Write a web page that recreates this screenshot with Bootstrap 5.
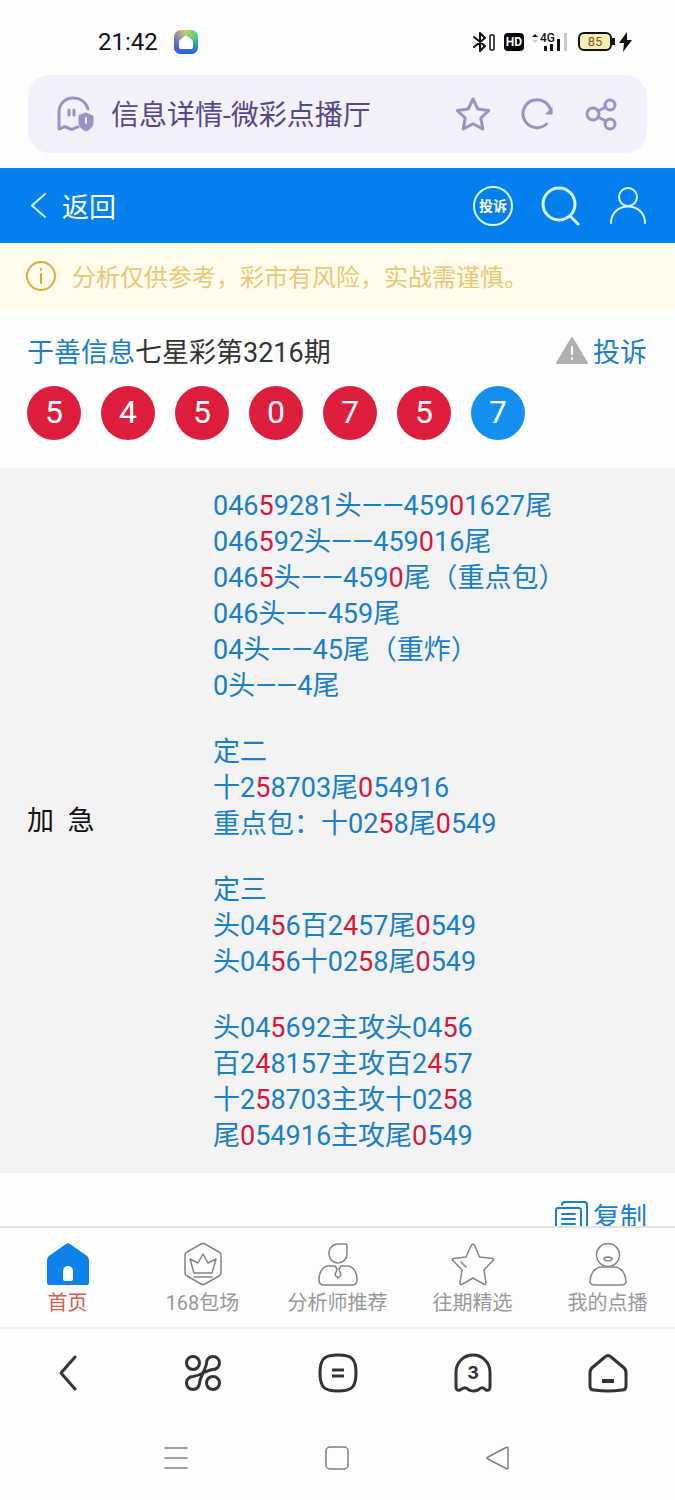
<!DOCTYPE html>
<html lang="zh-CN">
<head>
<meta charset="utf-8">
<meta name="viewport" content="width=device-width, initial-scale=1">
<title>信息详情-微彩点播厅</title>
<link href="https://cdn.jsdelivr.net/npm/bootstrap@5.3.0/dist/css/bootstrap.min.css" rel="stylesheet">
<style>
  :root { --brand: #0380ee; --ink-blue: #1a7fc9; --hit: #d8173a; --violet: #9a92c4; }
  body { font-family: Roboto, "Noto Sans CJK SC", sans-serif; font-size: 27px; line-height: 36px; color: #333; background: #fdfdfd; }
  svg { display: block; flex: none; fill: none; stroke-linecap: round; stroke-linejoin: round; }
  a { color: inherit; text-decoration: none; }
  .plain { border: 0; background: none; padding: 0; color: inherit; line-height: 1; }
  .cjk-label { padding-top: 4px; }
  .status-row { height: 75px; padding: 8px 42px 0 98px; color: #111; }
  .clock { font-size: 24px; }
  .hd-tag { width: 20px; height: 18px; border-radius: 4px; background: #000; color: #fff; font-size: 12px; line-height: 18px; font-weight: 700; text-align: center; }
  .battery { width: 34px; height: 19px; border: 2px solid #111; border-radius: 6px; background: #fbefb4; color: #7a5a20; font-size: 13px; line-height: 15px; text-align: center; }
  .battery-tip { width: 3px; height: 7px; background: #111; }
  .address { height: 78px; margin: 0 28px 15px; padding: 0 28px; border-radius: 22px; background: #f2f1f9; color: #54488c; font-size: 28px; }
  .address svg { stroke: var(--violet); }
  .address-actions { gap: 28px; }
  .topbar { height: 75px; padding: 0 28px 0 31px; background: var(--brand); color: #fff; }
  .topbar svg { stroke: #d9f6ff; }
  .complain-tag { width: 40px; height: 40px; border: 2px solid #d9f6ff; font-size: 14px; font-weight: 700; line-height: 36px; text-align: center; }
  .notice { height: 66px; padding: 0 26px; background: #fffcec; color: #ebc777; font-size: 24px; }
  .issue { padding: 22px 28px 28px 27px; }
  .blue-text { color: var(--ink-blue); }
  .ball { width: 54px; height: 54px; background: #dc1e3c; color: #fff; font-size: 32px; line-height: 52px; text-align: center; }
  .ball-last { background: #138ff0; }
  .gap-balls { gap: 20px; margin-top: 15px; }
  .forecast { padding: 20px 27px 19px; background: #f3f3f3; }
  .forecast-label { width: 186px; color: #111; }
  .forecast p { margin: 0 0 30px; }
  .forecast p:last-child { margin: 0; }
  .forecast b { color: var(--hit); font-weight: 400; }
  .copy-row { padding: 28px 28px; }
  .scroller { min-height: 0; scrollbar-width: none; }
  .scroller::-webkit-scrollbar { display: none; }
  .tabs { height: 103px; padding-top: 14px; border-top: 2px solid #e2e2e2; border-bottom: 2px solid #eee; color: #999; font-size: 20px; line-height: 34px; }
  .tabs svg { stroke: #858585; stroke-width: 1.5; }
  .tabs .on { color: #dc5a4c; }
  .toolbar { height: 87px; }
  .toolbar svg { stroke: #333; stroke-width: 3; }
  .sysnav { height: 84px; padding: 0 96px; }
  .sysnav svg { stroke: #808080; stroke-width: 1.5; }
</style>
</head>
<body>
<div class="d-flex flex-column vh-100">
  <header class="flex-shrink-0">
    <div class="status-row d-flex align-items-center">
      <span class="clock">21:42</span>
      <svg class="ms-3" width="24" height="24" viewBox="0 0 24 24" aria-hidden="true">
        <defs>
          <linearGradient id="hue" x1="0" y1="0" x2="1" y2="0"><stop offset="0" stop-color="#ff9a4a"/><stop offset=".45" stop-color="#e2d84f"/><stop offset="1" stop-color="#2fd08a"/></linearGradient>
          <linearGradient id="hue2" x1="1" y1="0" x2="0" y2="1"><stop offset=".2" stop-color="#2b8cf0" stop-opacity="0"/><stop offset=".55" stop-color="#2b7cf0" stop-opacity=".5"/><stop offset="1" stop-color="#5a45e0"/></linearGradient>
          <linearGradient id="hue3" x1="0" y1="0" x2="0" y2="1"><stop offset=".3" stop-color="#2563e8" stop-opacity="0"/><stop offset="1" stop-color="#2563e8"/></linearGradient>
        </defs>
        <rect width="24" height="24" rx="7" fill="url(#hue)"/><rect width="24" height="24" rx="7" fill="url(#hue2)"/><rect width="24" height="24" rx="7" fill="url(#hue3)"/>
        <path d="M5 12q0-2 2-3l4-3q1-1 2 0l4 3q2 1 2 3v5q0 2-2 2H7q-2 0-2-2z" fill="#fff"/>
      </svg>
      <div class="ms-auto d-flex align-items-center">
        <svg width="24" height="20" viewBox="0 0 24 20" stroke="#111" stroke-width="2" aria-hidden="true"><path d="M2 5l11 9-5 5V1l5 5-11 9"/><rect x="18" y="3" width="4" height="15" rx="1" stroke-width="1.5"/></svg>
        <span class="hd-tag ms-2">HD</span>
        <svg class="ms-2" width="38" height="20" viewBox="0 0 38 20" fill="#111" aria-hidden="true"><path fill="#111" d="M0 5l3-3 3 3zM12 14h3v5h-3zM18 12h3v7h-3zM25 7h3v12h-3z"/><path fill="#ccc" d="M0 8h6l-3 3zM32 1h3v18h-3z"/><text x="8" y="10" fill="#111" font-size="12" font-weight="500">4G</text></svg>
        <span class="battery ms-2">85</span><span class="battery-tip"></span>
        <svg class="ms-1" width="14" height="20" viewBox="0 0 14 20" aria-hidden="true"><path fill="#111" d="M8 0L0 11h5l-1 9 9-12H8z"/></svg>
      </div>
    </div>
    <div class="address d-flex align-items-center">
      <svg width="39" height="38" viewBox="0 0 39 38" stroke-width="3" aria-hidden="true"><path d="M32 14C30 7 24 3 17 3C9 3 3 9 3 17V34c3 0 4-3 7-2s4 3 7 2 3-2 5-2"/><path d="M13 15v5M18 15v5"/><path d="M30 18l7 3v7q0 5-7 8q-7-3-7-8v-7z" fill="#9a92c4" stroke-width="1"/><path d="M30 23v5" stroke="#f2f1f9" stroke-width="2"/></svg>
      <span class="cjk-label ms-3 text-nowrap">信息详情-微彩点播厅</span>
      <div class="address-actions ms-auto d-flex align-items-center">
        <button class="plain" aria-label="收藏"><svg width="36" height="36" viewBox="0 0 36 36" stroke-width="3"><path d="M18 3l4.800 10 11 1.500-8 7.500 2 11-9.800-5.300L8.200 33l2-11-8-7.500 11-1.500z"/></svg></button>
        <button class="plain" aria-label="刷新"><svg width="36" height="36" viewBox="0 0 36 36" stroke-width="3"><path d="M27.500 28A14 14 0 1 1 32 17"/><path d="M33 12v6h-6z" fill="#9a92c4" stroke-width="1"/></svg></button>
        <button class="plain" aria-label="分享"><svg width="36" height="36" viewBox="0 0 36 36" stroke-width="3"><circle cx="10" cy="18" r="6"/><circle cx="27" cy="9" r="5"/><circle cx="27" cy="28" r="5"/><path d="M15 15l8-4M15 21l8 4"/></svg></button>
      </div>
    </div>
  </header>

  <nav class="topbar flex-shrink-0 d-flex align-items-center">
    <a href="#" class="d-flex align-items-center"><svg class="me-3" width="15" height="25" viewBox="0 0 15 25" stroke-width="2"><path d="M14 1L1 12.500 14 24"/></svg><span class="cjk-label">返回</span></a>
    <div class="ms-auto d-flex align-items-center">
      <a href="#" class="complain-tag rounded-circle">投诉</a>
      <a href="#" class="ms-4 ps-1" aria-label="搜索"><svg width="40" height="40" viewBox="0 0 40 40" stroke-width="3"><circle cx="18" cy="18" r="16"/><path d="M29 30l8 8"/></svg></a>
      <a href="#" class="ms-4 ps-1" aria-label="我的"><svg width="38" height="40" viewBox="0 0 38 40" stroke-width="2"><circle cx="19" cy="11" r="9"/><path d="M2 37c0-22 34-22 34 0"/></svg></a>
    </div>
  </nav>

  <main class="scroller flex-grow-1 overflow-auto">
    <div class="notice d-flex align-items-center">
      <svg class="me-3" width="30" height="30" viewBox="0 0 30 30" stroke="#e0a83c" stroke-width="2" aria-hidden="true"><circle cx="15" cy="15" r="14"/><path d="M15 13v9"/><path d="M15 8v1"/></svg>
      <span class="cjk-label">分析仅供参考，彩市有风险，实战需谨慎。</span>
    </div>

    <section class="issue">
      <div class="d-flex align-items-center justify-content-between">
        <div class="cjk-label"><a href="#" class="blue-text">于善信息</a>七星彩第3216期</div>
        <a href="#" class="blue-text d-flex align-items-center"><svg class="me-1" width="34" height="30" viewBox="0 0 34 30" aria-hidden="true"><path fill="#b0b0b0" stroke="#b0b0b0" stroke-width="2" d="M17 2l15 25H2z"/><path d="M17 11v7M17 22v1" stroke="#fff" stroke-width="2"/></svg><span class="cjk-label">投诉</span></a>
      </div>
      <div class="d-flex gap-balls">
        <span class="ball rounded-circle">5</span><span class="ball rounded-circle">4</span><span class="ball rounded-circle">5</span><span class="ball rounded-circle">0</span><span class="ball rounded-circle">7</span><span class="ball rounded-circle">5</span><span class="ball ball-last rounded-circle">7</span>
      </div>
    </section>

    <section class="forecast d-flex align-items-center">
      <div class="forecast-label flex-shrink-0">加&nbsp;&nbsp;急</div>
      <div class="blue-text">
        <p>046<b>5</b>9281头——459<b>0</b>1627尾<br>046<b>5</b>92头——459<b>0</b>16尾<br>046<b>5</b>头——459<b>0</b>尾（重点包）<br>046头——459尾<br>04头——45尾（重炸）<br>0头——4尾</p>
        <p>定二<br>十2<b>5</b>8703尾<b>0</b>54916<br>重点包：十02<b>5</b>8尾<b>0</b>549</p>
        <p>定三<br>头04<b>5</b>6百2<b>4</b>57尾<b>0</b>549<br>头04<b>5</b>6十02<b>5</b>8尾<b>0</b>549</p>
        <p>头04<b>5</b>692主攻头04<b>5</b>6<br>百2<b>4</b>8157主攻百2<b>4</b>57<br>十2<b>5</b>8703主攻十02<b>5</b>8<br>尾<b>0</b>54916主攻尾<b>0</b>549</p>
      </div>
    </section>

    <div class="copy-row d-flex justify-content-end blue-text">
      <button class="plain d-flex align-items-center"><svg class="me-1" width="34" height="34" viewBox="0 0 34 34" stroke="#1a7fc9" stroke-width="2"><path d="M7 4q0-3 3-3h19q3 0 3 3v23"/><rect x="1" y="7" width="25" height="26" rx="2"/><path d="M7 13h13M7 18h13M7 23h13"/></svg>复制</button>
    </div>
  </main>

  <nav class="tabs flex-shrink-0 row row-cols-5 g-0 text-center">
    <a href="#" class="col on"><svg class="mx-auto" width="44" height="44" viewBox="0 0 44 44"><path fill="#0f82ea" stroke="none" d="M20 2q2-1.500 4 0l17 12q2 1.500 2 4v23q0 2-2 2H3q-2 0-2-2V18q0-2.500 2-4z"/><path fill="#fff" stroke="none" d="M17 37V29a5 5 0 0 1 10 0v8q0 2-2 2h-6q-2 0-2-2z"/></svg>首页</a>
    <a href="#" class="col"><svg class="mx-auto" width="44" height="44" viewBox="0 0 44 44"><path d="M20 2q2-1 4 0l14 8q2 1 2 3v18q0 2-2 3l-14 8q-2 1-4 0L6 34q-2-1-2-3V13q0-2 2-3z"/><path d="M13 31L9 17l8 4 5-9 5 9 8-4-4 14zM13 35h18"/></svg>168包场</a>
    <a href="#" class="col"><svg class="mx-auto" width="44" height="44" viewBox="0 0 44 44"><path d="M22 2h7q2 0 2 2v8a9 9 0 0 1-18 0a9 9 0 0 1 9-10zM19 24H13C6 24 3 31 3 38q0 5 5 5h28q5 0 5-5c0-7-3-14-10-14h-6M19 24l2 3-2 6 3 3 3-3-2-6 2-3"/></svg>分析师推荐</a>
    <a href="#" class="col"><svg class="mx-auto" width="44" height="44" viewBox="0 0 44 44"><path d="M20 4q2-4 4 0l4.500 11 13 1.500q2 .5 .5 2L33 28l2 13q0 2-2 1.300L22 36 11 42.300q-2 .7-2-1.300l2-13L2 18.500q-1.500-1.500 .5-2L15 15z"/><path d="M10 20l5 5"/></svg>往期精选</a>
    <a href="#" class="col"><svg class="mx-auto" width="44" height="44" viewBox="0 0 44 44"><circle cx="22" cy="13" r="11.500"/><path d="M18 16q4-2 8 0c0 4-8 4-8 0zM16 25h12c8 0 12 8 12 14q0 4-4 4H8q-4 0-4-4c0-6 4-14 12-14z"/></svg>我的点播</a>
  </nav>

  <nav class="toolbar flex-shrink-0 row row-cols-5 g-0 align-items-center">
    <button class="plain col" aria-label="后退"><svg class="mx-auto" width="40" height="40" viewBox="0 0 40 40"><path d="M27 4L13 20l14 16"/></svg></button>
    <button class="plain col" aria-label="应用"><svg class="mx-auto" width="40" height="40" viewBox="0 0 40 40"><circle cx="10" cy="10" r="6.500"/><circle cx="30" cy="30" r="6.500"/><path d="M23.500 10A6.500 6.500 0 1 1 30 16.500C24 17 16 23 10 23.500A6.500 6.500 0 1 0 16.500 30C17 24 23 16 23.500 10z"/></svg></button>
    <button class="plain col" aria-label="菜单"><svg class="mx-auto" width="40" height="40" viewBox="0 0 40 40"><path d="M20 2c14 0 18 4 18 18s-4 18-18 18S2 34 2 20 6 2 20 2z"/><path d="M14 17h12M14 23h12" stroke-linecap="butt"/></svg></button>
    <button class="plain col" aria-label="标签页"><svg class="mx-auto" width="40" height="40" viewBox="0 0 40 40"><path d="M3 34V19a17 17 0 0 1 34 0v15q0 4-4 3c-3-3-5-3-8 0q-5 2-9 0c-3-3-5-3-9 0q-4 1-4-3z"/><text x="20" y="26" fill="#333" stroke="none" text-anchor="middle" font-family="Inter, sans-serif" font-size="18" font-weight="700">3</text></svg></button>
    <button class="plain col" aria-label="主页"><svg class="mx-auto" width="40" height="40" viewBox="0 0 40 40"><path d="M17 4q3-3 6 0l12 10q3 2 3 6v13q0 4-4 4-14 2-28 0-4 0-4-4V20q0-4 3-6z"/><path d="M14 28h12" stroke-linecap="butt" stroke-width="4"/></svg></button>
  </nav>

  <nav class="sysnav flex-shrink-0 row row-cols-3 g-0 align-items-center">
    <button class="plain col" aria-label="最近任务"><svg class="mx-auto" width="24" height="24" viewBox="0 0 24 24"><path d="M1 2h22M1 12h22M1 22h22"/></svg></button>
    <button class="plain col" aria-label="桌面"><svg class="mx-auto" width="24" height="24" viewBox="0 0 24 24"><rect x="1" y="1" width="22" height="22" rx="4"/></svg></button>
    <button class="plain col" aria-label="返回"><svg class="mx-auto" width="24" height="24" viewBox="0 0 24 24"><path d="M2 13q-2-1 0-2L20 1.500q2-1 2 1v19q0 2-2 1z"/></svg></button>
  </nav>
</div>
<script src="https://cdn.jsdelivr.net/npm/bootstrap@5.3.0/dist/js/bootstrap.bundle.min.js"></script>
</body>
</html>
